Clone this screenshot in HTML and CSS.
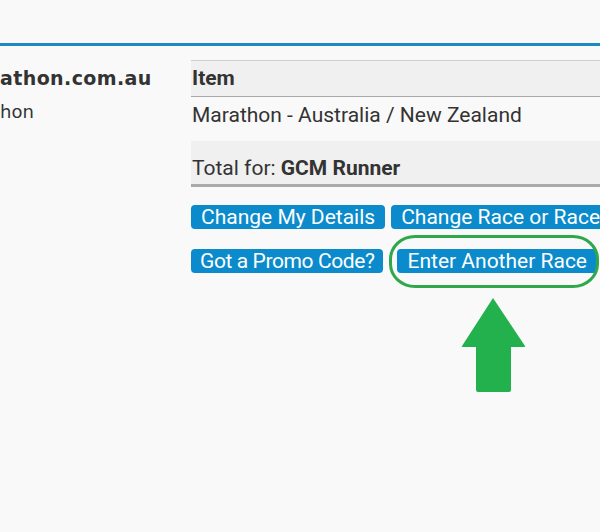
FILE: index.html
```html
<!DOCTYPE html>
<html lang="en">
<head>
    <meta charset="UTF-8">
    <meta name="viewport" content="width=device-width, initial-scale=1.0">
    <title>Registration Summary</title>
    <link rel="stylesheet" href="styles.css">
</head>
<body>
    <div class="topbar"></div>
    <div class="page">
        <div class="side">
            <div class="site">athon.com.au</div>
            <div class="sub">hon</div>
        </div>
        <div class="main">
            <table class="cart">
                <thead>
                    <tr><th>Item</th></tr>
                </thead>
                <tbody>
                    <tr><td>Marathon - Australia / New Zealand</td></tr>
                </tbody>
                <tfoot>
                    <tr><td>Total for: <b>GCM Runner</b></td></tr>
                </tfoot>
            </table>
            <div class="actions">
                <a href="#" class="btn">Change My Details</a>
                <a href="#" class="btn">Change Race or Races</a>
            </div>
            <div class="actions">
                <a href="#" class="btn btn-promo">Got a Promo Code?</a>
                <a href="#" class="btn">Enter Another Race</a>
            </div>
            <!-- annotation drawn over the screenshot -->
            <div class="highlight"></div>
            <svg class="arrow" width="66" height="96" viewBox="0 0 66 96">
                <path d="M32 1 L64 49 Q65 50 63 50 L50 50 L50 93 Q50 95 48 95 L17 95 Q15 95 15 93 L15 50 L2 50 Q0 50 1 49 Z" fill="#22b14c"/>
            </svg>
        </div>
    </div>
</body>
</html>
```

FILE: styles.css
```css
html, body {
    height: 100%;
}
body {
    margin: 0;
    padding: 0;
    background-color: #f9f9f9;
    color: #333;
    font-family: Roboto, Arial, sans-serif;
    overflow: hidden;
}
.topbar {
    height: 3px;
    margin-top: 43px;
    background-color: #1b8bbd;
}
.page {
    display: flex;
    height: calc(100% - 46px);
    overflow: hidden;
}
.side {
    width: 191px;
    flex: none;
    padding-top: 15px;
    font-family: "DejaVu Sans", Verdana, sans-serif;
    font-size: 18px;
    line-height: 34px;
}
.site {
    font-size: 19px;
    font-weight: bold;
    letter-spacing: 0.4px;
}
.main {
    position: relative;
    width: 540px;
    flex: none;
    padding-top: 14px;
}
.cart {
    width: 100%;
    border-collapse: collapse;
    font-size: 21px;
    line-height: 24px;
}
.cart th {
    text-align: left;
    background-color: #f0f0f0;
    border-top: 1px solid #cfcfcf;
    border-bottom: 1px solid #a9a9a9;
    padding: 5px 1px 6px;
}
.cart tbody td {
    padding: 6px 1px 14px;
}
.cart tfoot td {
    background-color: #f0f0f0;
    border-bottom: 3px solid #aaa;
    padding: 15px 1px 4px;
}
.actions {
    margin-top: 18px;
    white-space: nowrap;
    font-size: 0;
}
.actions + .actions {
    margin-top: 20px;
}
.btn {
    display: inline-block;
    margin-right: 6px;
    padding: 0 10px;
    border-radius: 4px;
    background-color: #0b8bcb;
    color: #fff;
    font-size: 21px;
    line-height: 24px;
    text-decoration: none;
}
.btn-promo {
    letter-spacing: -0.4px;
    padding: 0 9px;
    margin-right: 14px;
}
.highlight {
    position: absolute;
    left: 198px;
    top: 189px;
    width: 204px;
    height: 47px;
    border: 3px solid #2ea84b;
    border-radius: 26px / 24px;
}
.arrow {
    position: absolute;
    left: 270px;
    top: 251px;
}
```
